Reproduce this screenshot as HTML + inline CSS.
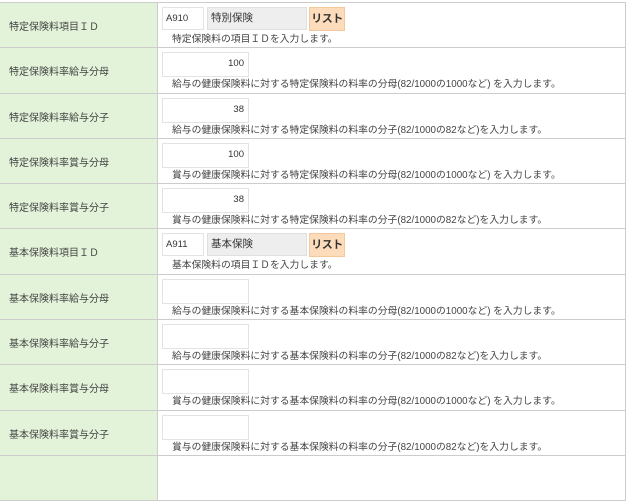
<!DOCTYPE html>
<html><head><meta charset="utf-8"><style>
body{margin:0;width:628px;height:458px;overflow:hidden;background:#fff;font-family:"Liberation Sans","Noto Sans CJK JP",sans-serif;font-size:11px;color:#444}
.t{position:absolute;left:0;top:2px;width:626px;border-top:1px solid #ccc}
.r{position:relative;height:44.3px;border-bottom:1px solid #ccc;border-right:1px solid #ccc}
.l{position:absolute;left:0;top:0;bottom:0;width:157px;background:#e3f3d9;border-right:1px solid #ccc}
.l span{position:absolute;left:9px;top:15px;font-size:10px;color:#444;white-space:nowrap}
.in{position:absolute;top:4px;height:23px;border:1px solid #e3e3e3;background:#fff;box-sizing:border-box;font-size:9.5px;line-height:21px;text-align:right;padding-right:4px;color:#333}
.d{position:absolute;left:172px;top:28px;font-size:9.8px;color:#444;white-space:nowrap}
.id{left:162px;width:42px;text-align:left;padding-left:3px}
.nm{left:207px;width:100px;background:#eee;border-color:#e0e0e0;text-align:left;padding-left:3px;font-size:10.5px}
.bt{position:absolute;left:309px;top:4px;width:36px;height:24px;background:#fddcbb;border:1px solid #f5c79a;box-sizing:border-box;font-weight:bold;font-size:11px;line-height:22px;text-align:center;color:#333;white-space:nowrap;letter-spacing:-0.5px}
.n{left:162px;width:87px;height:25px}
</style></head><body><div class="t">
<div class="r"><div class="l"><span>特定保険料項目ＩＤ</span></div><div class="in id">A910</div><div class="in nm">特別保険</div><div class="bt">リスト</div><div class="d">特定保険料の項目ＩＤを入力します。</div></div>
<div class="r"><div class="l"><span>特定保険料率給与分母</span></div><div class="in n">100</div><div class="d">給与の健康保険料に対する特定保険料の料率の分母(82/1000の1000など) を入力します。</div></div>
<div class="r"><div class="l"><span>特定保険料率給与分子</span></div><div class="in n">38</div><div class="d">給与の健康保険料に対する特定保険料の料率の分子(82/1000の82など)を入力します。</div></div>
<div class="r"><div class="l"><span>特定保険料率賞与分母</span></div><div class="in n">100</div><div class="d">賞与の健康保険料に対する特定保険料の料率の分母(82/1000の1000など) を入力します。</div></div>
<div class="r"><div class="l"><span>特定保険料率賞与分子</span></div><div class="in n">38</div><div class="d">賞与の健康保険料に対する特定保険料の料率の分子(82/1000の82など)を入力します。</div></div>
<div class="r"><div class="l"><span>基本保険料項目ＩＤ</span></div><div class="in id">A911</div><div class="in nm">基本保険</div><div class="bt">リスト</div><div class="d">基本保険料の項目ＩＤを入力します。</div></div>
<div class="r"><div class="l"><span>基本保険料率給与分母</span></div><div class="in n"></div><div class="d">給与の健康保険料に対する基本保険料の料率の分母(82/1000の1000など) を入力します。</div></div>
<div class="r"><div class="l"><span>基本保険料率給与分子</span></div><div class="in n"></div><div class="d">給与の健康保険料に対する基本保険料の料率の分子(82/1000の82など)を入力します。</div></div>
<div class="r"><div class="l"><span>基本保険料率賞与分母</span></div><div class="in n"></div><div class="d">賞与の健康保険料に対する基本保険料の料率の分母(82/1000の1000など) を入力します。</div></div>
<div class="r"><div class="l"><span>基本保険料率賞与分子</span></div><div class="in n"></div><div class="d">賞与の健康保険料に対する基本保険料の料率の分子(82/1000の82など)を入力します。</div></div>
<div class="r"><div class="l"></div></div>
</div></body></html>
